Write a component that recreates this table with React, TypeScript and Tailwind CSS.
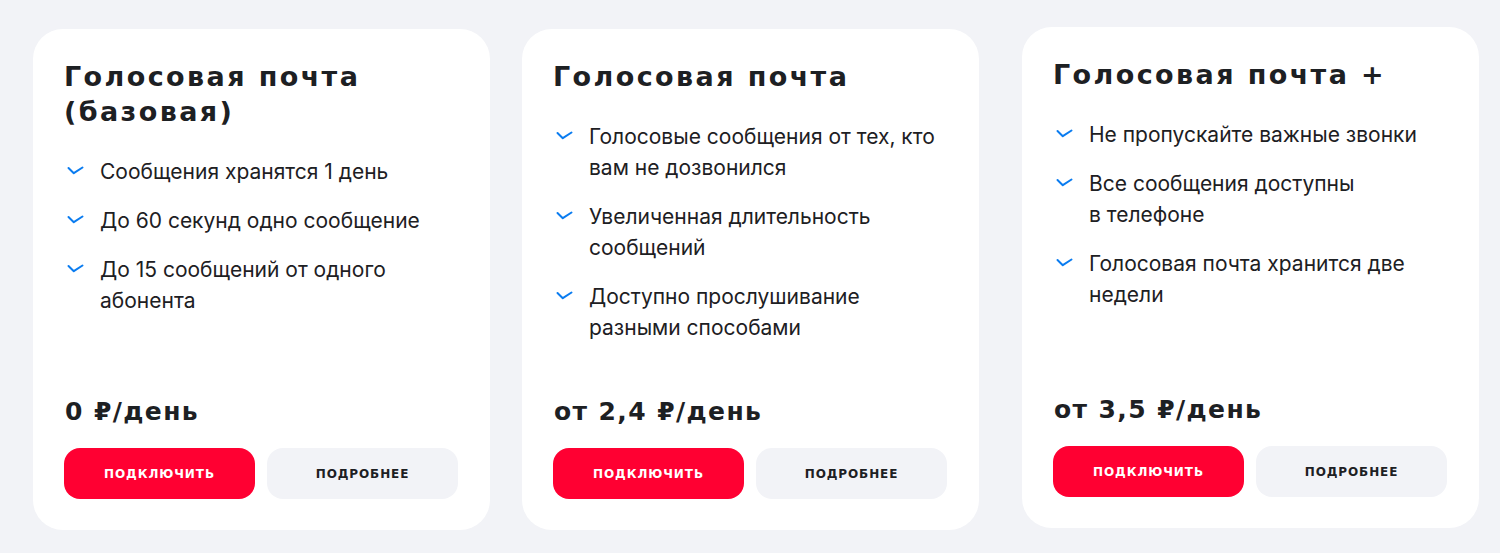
const plans = [
  {
    title: ["Голосовая почта", "(базовая)"],
    features: [
      ["Сообщения хранятся 1 день"],
      ["До 60 секунд одно сообщение"],
      ["До 15 сообщений от одного", "абонента"],
    ],
    price: "0 ₽/день",
  },
  {
    title: ["Голосовая почта"],
    features: [
      ["Голосовые сообщения от тех, кто", "вам не дозвонился"],
      ["Увеличенная длительность", "сообщений"],
      ["Доступно прослушивание", "разными способами"],
    ],
    price: "от 2,4 ₽/день",
  },
  {
    title: ["Голосовая почта +"],
    features: [
      ["Не пропускайте важные звонки"],
      ["Все сообщения доступны", "в телефоне"],
      ["Голосовая почта хранится две", "недели"],
    ],
    price: "от 3,5 ₽/день",
  },
];

const CheckIcon = () => (
  <svg width="17" height="9" viewBox="0 0 17 9" fill="none" className="mt-[10px] shrink-0">
    <path d="M1.5 2 L6.8 7.2 L15.5 1.5" stroke="#0a7cf0" strokeWidth="2" strokeLinecap="round" strokeLinejoin="round" />
  </svg>
);

const PlanCard = ({ plan, className }: { plan: (typeof plans)[number]; className?: string }) => (
  <div className={`flex h-[501px] w-[457px] shrink-0 flex-col rounded-[30px] bg-white pt-[30px] pb-[31px] pl-[31px] pr-[32px] ${className ?? ""}`}>
    <h3 className="font-['DejaVu_Sans',sans-serif] text-[27px] leading-[35px] font-bold tracking-[2.4px] text-[#1d2023]">
      {plan.title.map((line) => (
        <div key={line}>{line}</div>
      ))}
    </h3>

    <ul className="mt-[27px] flex flex-col gap-[18px] font-['Inter',sans-serif] text-[21px] leading-[31px] text-[#1d2023]">
      {plan.features.map((lines) => (
        <li key={lines[0]} className="flex gap-[16px] pl-[3px]">
          <CheckIcon />
          <div>
            {lines.map((l) => (
              <div key={l}>{l}</div>
            ))}
          </div>
        </li>
      ))}
    </ul>

    <div className="mt-auto">
      <div className="pl-[1px] font-['DejaVu_Sans',sans-serif] text-[25px] leading-[32px] font-bold tracking-[1.4px] text-[#1d2023]">
        {plan.price}
      </div>
      <div className="mt-[20px] flex gap-3">
        <button className="h-[51px] flex-1 rounded-[16px] bg-[#ff0032] font-['DejaVu_Sans',sans-serif] text-[12px] font-bold tracking-[0.9px] text-white">
          ПОДКЛЮЧИТЬ
        </button>
        <button className="h-[51px] flex-1 rounded-[16px] bg-[#f2f3f7] font-['DejaVu_Sans',sans-serif] text-[12px] font-bold tracking-[0.9px] text-[#1d2023]">
          ПОДРОБНЕЕ
        </button>
      </div>
    </div>
  </div>
);

export default function App() {
  return (
    <div className="flex h-[553px] w-[1500px] items-start bg-[#f2f3f7] pt-[29px] pl-[33px]">
      <PlanCard plan={plans[0]} />
      <PlanCard plan={plans[1]} className="ml-[32px]" />
      <PlanCard plan={plans[2]} className="ml-[43px] -mt-[2px]" />
    </div>
  );
}
